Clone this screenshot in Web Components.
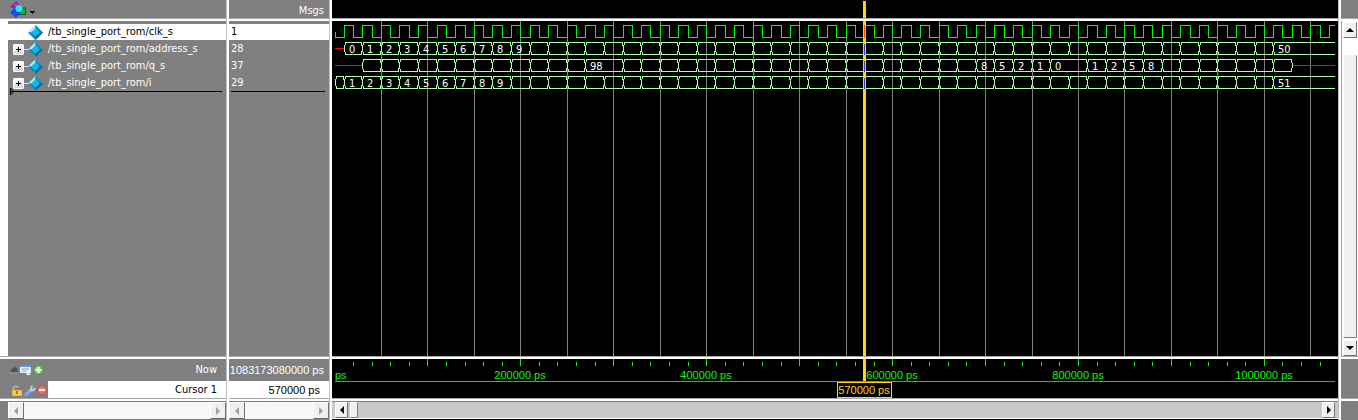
<!DOCTYPE html>
<html lang="en">
<head>
<meta charset="utf-8">
<title>Wave</title>
<style>
  html, body { margin: 0; height: 100%; background: #808080; }
  body { font: 11px/16px "DejaVu Sans Condensed", "DejaVu Sans", sans-serif; --num: "Liberation Sans", Arial, sans-serif; overflow: hidden; }
</style>
</head>
<body>
<wave-window>
  <wave-pane slot="names">
    <object-menu slot="head"></object-menu>
    <signal-names slot="body"></signal-names>
    <cursor-names slot="foot"></cursor-names>
    <scroll-bar slot="scroll" disabled></scroll-bar>
  </wave-pane>
  <wave-pane slot="values">
    <msgs-title slot="head">Msgs</msgs-title>
    <signal-values slot="body"></signal-values>
    <cursor-values slot="foot"></cursor-values>
    <scroll-bar slot="scroll" disabled></scroll-bar>
  </wave-pane>
  <wave-pane slot="waves">
    <wave-strip slot="head"></wave-strip>
    <wave-traces slot="body"></wave-traces>
    <time-ruler slot="foot"></time-ruler>
    <scroll-bar slot="scroll"></scroll-bar>
  </wave-pane>
  <wave-pane slot="side">
    <scroll-bar slot="body" vertical></scroll-bar>
  </wave-pane>
</wave-window>

<script>
const define = (name, html, ready) => {
  const t = document.createElement('template');
  t.innerHTML = html;
  customElements.define(name, class extends HTMLElement {
    constructor() {
      super();
      this.attachShadow({ mode: 'open' }).append(t.content.cloneNode(true));
    }
    connectedCallback() { if (ready) ready(this, this.shadowRoot); }
  });
};

const signals = [
  { name: '/tb_single_port_rom/clk_s', value: '1', bus: false },
  { name: '/tb_single_port_rom/address_s', value: '28', bus: true },
  { name: '/tb_single_port_rom/q_s', value: '37', bus: true },
  { name: '/tb_single_port_rom/i', value: '29', bus: true }
];

/* Time in ps to a pixel column of the wave area. */
const px = t => Math.floor(-0.1 + t * 0.0009295);
const CURSOR = 570000, END = 4000000, FAR = 4000;

define('wave-window', `
<style>
  :host { display: grid; height: 100vh; min-height: 200px;
    grid-template-columns: 226px 3px 100px 3px minmax(0, 1fr) 3px 17px; }
  i { background: linear-gradient(to right, #c0c0c0 1px, #fff 1px); }
</style>
<slot name="names"></slot><i></i><slot name="values"></slot><i></i><slot name="waves"></slot><i></i><slot name="side"></slot>`);

define('wave-pane', `
<style>
  :host { display: grid; min-width: 0; background: #808080;
    grid-template-columns: minmax(0, 1fr);
    grid-template-rows: 18px 3px minmax(0, 1fr) 3px 39px 4px 18px; }
  :host([slot="waves"]) { background: #000; }
  div { display: grid; grid-template-columns: minmax(0, 1fr); min-width: 0; min-height: 0; overflow: hidden; }
  i { background: linear-gradient(#a8a8a8 1px, #fff 1px); }
  i.low { background: linear-gradient(#a8a8a8 1px, #fff 1px, #fff 3px, #808080 3px); }
</style>
<div><slot name="head"></slot></div><i></i>
<div><slot name="body"></slot></div><i></i>
<div><slot name="foot"></slot></div><i class="low"></i>
<div><slot name="scroll"></slot></div>`);

define('object-menu', `
<style>
  :host { display: flex; padding-left: 9px; }
  button { display: flex; align-items: center; padding: 0; border: 0; background: none; height: 18px; }
</style>
<button aria-label="Object type"><svg width="28" height="18" viewBox="0 0 28 18">
  <path d="M2 7L7 2l5 5z" fill="#e020f0" stroke="#701080"/>
  <rect x="9.500" y="8" width="7" height="6.500" fill="#10b040" stroke="#086020"/>
  <path d="M1 12.500L6 7l6 6-5 5z" fill="#1050e8"/>
  <circle cx="10" cy="8.500" r="3.500" fill="#20e8f8"/>
  <path d="M21 11h5v1h-1v1h-1v1h-1v-1h-1v-1h-1z" fill="#000"/>
</svg></button>`);

define('msgs-title', `
<style>:host { display: block; text-align: right; padding: 3px 5px 0 0; line-height: 15px; color: #fff; }</style><slot></slot>`);

const gem = `<svg width="15" height="15" viewBox="0 0 15 15">
  <path d="M7.500 0L15 7.500 7.500 15 0 7.500z" fill="#18a8d8"/>
  <path d="M7.500 0L0 7.500h3.500l4-4z" fill="#a8ecfa"/>
  <path d="M7.500 0L15 7.500h-3.500l-4-4z" fill="#1890c0"/>
  <path d="M7.500 15L15 7.500h-3.500l-4 4z" fill="#056088"/>
  <path d="M7.500 15L0 7.500h3.500l4 4z" fill="#1c88b4"/>
  <path d="M7.500 3.500l4 4-4 4-4-4z" fill="#08bcec"/></svg>`;

define('signal-names', `
<style>
  :host { display: block; border-left: 8px solid #fff; padding-top: 3px; color: #fff; }
  ul { display: grid; gap: 1px; margin: 0; padding: 0; list-style: none; }
  li { display: grid; grid-template-columns: 20px 20px 1fr; height: 16px; align-items: center; line-height: 14px; white-space: nowrap; }
  li.on { background: #fff; color: #000; }
  li > svg { display: block; }
  button { position: relative; width: 11px; height: 11px; margin-left: 5px; padding: 0; border: 1px solid #fff; border-radius: 1px; background: linear-gradient(#fff, #d4d4dc); display: block; }
  button svg { position: absolute; left: 0; top: 0; overflow: visible; }
  .mark { display: block; overflow: visible; }
</style>
<ul></ul>
<svg class="mark" width="100%" height="1"><path d="M3 0H214V1H3z"/><path d="M2.500 -3V4L6 .500z" fill="none" stroke="#000"/></svg>`,
(el, root) => {
  root.querySelector('ul').innerHTML = signals.map((s, n) => `<li class="${n ? '' : 'on'}"><span>${s.bus
    ? `<button aria-label="Expand"><svg width="9" height="9"><path d="M2 4H7V5H2zM4 2H5V7H4z" fill="#000"/><path d="M10 4h5v1h-5z" fill="#e0e0e0"/></svg></button>` : ''}</span>${gem}<span>${s.name}</span></li>`).join('');
});

define('signal-values', `
<style>
  :host { display: block; padding-top: 3px; color: #fff; }
  ul { display: grid; gap: 1px; margin: 0; padding: 0; list-style: none; }
  li { height: 16px; padding-left: 2px; line-height: 16px; }
  li.on { background: #fff; color: #000; }
  hr { margin: 0 4px 0 2px; border: 0; height: 1px; background: #000; }
</style>
<ul></ul><hr>`,
(el, root) => {
  root.querySelector('ul').innerHTML = signals.map((s, n) => `<li class="${n ? '' : 'on'}">${s.value}</li>`).join('');
});

define('cursor-names', `
<style>
  :host { display: grid; grid-template-rows: 22px 17px; }
  div { display: grid; grid-template-columns: 48px 1fr; }
  span { text-align: right; padding-right: 9px; color: #fff; line-height: 22px; }
  .c span { background: #fff; color: #000; line-height: 18px; }
  nav { display: flex; align-items: center; padding-left: 9px; gap: 1px; }
  .c nav { padding-left: 11px; gap: 0; }
  button { display: block; padding: 0; border: 0; background: none; }
  svg { display: block; }
</style>
<div><nav>
  <button aria-label="Snap"><svg width="10" height="12"><path d="M1 8L3 4l1 1 1-3 2 2 1-1 1 6z" fill="#505050"/><path d="M0 9h10M2 8v2M7 8v2" stroke="#6a9cd8"/></svg></button>
  <button aria-label="Time display"><svg width="12" height="12"><rect x="0" y="1" width="11" height="8" fill="#e4eefa"/><rect x="0" y="1" width="11" height="2" fill="#5c98e0"/><path d="M2 5h7M2 7h4" stroke="#90a8c8"/><path d="M6 11l2-3 3 3z" fill="#e8f0f8"/></svg></button>
  <button aria-label="Add cursor"><svg width="12" height="12"><circle cx="5.500" cy="6" r="5" fill="#48a840"/><circle cx="5.500" cy="6" r="3.800" fill="#78c868"/><path d="M5.500 3v6M2.500 6h6" stroke="#fff" stroke-width="2"/></svg></button>
</nav><span>Now</span></div>
<div class="c"><nav>
  <button aria-label="Lock cursor"><svg width="13" height="13"><path d="M2.500 6V3.500a3 3 0 0 1 5 0" fill="none" stroke="#b8b8b0" stroke-width="1.500"/><rect x="1" y="6" width="10" height="6" fill="#f0b840"/><path d="M2 8h8M2 10h8" stroke="#f8d880"/><path d="M5 7h2v3H5z" fill="#b07818"/></svg></button>
  <button aria-label="Edit cursor"><svg width="13" height="13"><path d="M2 10.500L7 6" stroke="#78a8f0" stroke-width="3.500" stroke-linecap="round"/><path d="M6 7l2-2M8 1.500L7 5l2 1.500L11.500 4" stroke="#c0ccd8" stroke-width="2" fill="none"/></svg></button>
  <button aria-label="Remove cursor"><svg width="11" height="13"><circle cx="5" cy="6" r="5" fill="#d84840"/><circle cx="5" cy="6" r="4" fill="#ee706a"/><path d="M2 6h6" stroke="#fff" stroke-width="2"/></svg></button>
</nav><span>Cursor 1</span></div>`);

define('cursor-values', `
<style>
  :host { display: grid; grid-template-rows: 22px 17px; font-family: var(--num); white-space: nowrap; }
  div { text-align: right; padding-right: 5px; line-height: 22px; color: #fff; }
  .c { padding-right: 9px; background: #fff; color: #000; line-height: 18px; }
</style>
<div>1083173080000 ps</div><div class="c">570000 ps</div>`);

define('wave-strip', `
<style>:host { display: block; margin: 0 3px; } svg { display: block; width: 100%; height: 18px; }</style>
<svg><rect y="1" width="3" height="17" fill="#ffd700"/></svg>`,
(el, root) => root.querySelector('rect').setAttribute('x', px(CURSOR) - 1));

define('wave-traces', `
<style>
  :host { display: block; margin: 0 3px; min-height: 0; }
  svg { display: block; width: 100%; height: 100%; }
  path { fill: none; shape-rendering: crispEdges; }
  text { fill: #fff; }
</style><svg></svg>`,
(el, root) => {
  let grid = '', clk = 'M.5 11V16.500', out = '', over = '';
  for (let t = 50000; t < END; t += 50000) grid += `M${px(t) + .5} 0V3000`;
  for (let t = 10000; t < END; t += 20000)
    clk += `H${px(t) + .5}V4.500H${px(t + 10000) + .5}V16.500`;

  const bus = (top, edges, labels, red) => {
    const mid = top + 6, low = top + 12;
    let d = '';
    for (let n = 0; n < edges.length - 1; n++) {
      const a = edges[n] === null ? 0 : px(edges[n]), b = edges[n + 1] === null ? FAR : px(edges[n + 1]);
      d += `M${a + .5} ${mid}L${a + 1.5} ${top}H${b - .5}L${b + .5} ${mid}L${b - .5} ${low}H${a + 1.5}z`;
    }
    out += `<path d="${d}" stroke="#a8ffa8"/>`;
    for (const [a, b] of red) out += `<path d="M${a} ${mid}H${b}" stroke="#f00"/>`;
    for (const [t, s] of labels) out += `<text x="${px(t) + 5}" y="${top + 10.5}">${s}</text>`;
    over += `<path d="M${px(CURSOR) + .5} ${top + 1}V${low}" stroke="#5030a0"/>`;
  };
  const range = (from, to, skip = []) => {
    const r = [];
    for (let t = from; t <= to; t += 20000) if (!skip.includes(t)) r.push(t);
    return r;
  };
  bus(21.5, [...range(10000, 1010000), null],
    [...Array.from({ length: 10 }, (_, n) => [10000 + n * 20000, n]), [1010000, 50]], [[0, px(10000)]]);
  bus(38.5, range(30000, 1030000, [290000, 790000]),
    [[270000, 98], [690000, 8], [710000, 5], [730000, 2], [750000, 1], [770000, 0], [810000, 1], [830000, 2], [850000, 5], [870000, 8]],
    [[0, px(30000)], [px(1030000) + 1, FAR]]);
  bus(55.5, [null, ...range(10000, 1010000), null],
    [...Array.from({ length: 9 }, (_, n) => [10000 + n * 20000, n + 1]), [1010000, 51]], []);

  const c = px(CURSOR);
  root.querySelector('svg').innerHTML =
    `<path d="${grid}" stroke="#808080"/><path d="${clk}" stroke="#0f0"/>${out}
     <path d="M${c + .5} 0V3000" stroke="#ffd700" stroke-width="3"/>
     <path d="M${c + .5} 4V17" stroke="#ff4010"/>${over}`;
});

define('time-ruler', `
<style>
  :host { display: block; margin: 0 3px; font-family: var(--num); }
  svg { display: block; width: 100%; height: 39px; }
  path { fill: none; shape-rendering: crispEdges; }
  text { fill: #0f0; text-anchor: middle; }
  .zero { text-anchor: start; }
  .now { fill: #ffd700; }
</style><svg></svg>`,
(el, root) => {
  const svg = root.querySelector('svg');
  const draw = () => {
    const width = svg.clientWidth || el.getBoundingClientRect().width;
    let ticks = '', labels = '';
    for (let t = 20000; px(t) < width; t += 20000) ticks += `M${px(t) + .5} ${t % 100000 ? 3 : 0}V7`;
    for (let t = 200000; px(t) + 30 < width; t += 200000) labels += `<text x="${px(t)}" y="20">${t} ps</text>`;
    const c = px(CURSOR);
    svg.innerHTML =
      `<path d="${ticks}" stroke="#0f0"/><text class="zero" x="0" y="20">ps</text>${labels}
       <path d="M0 22.500H${FAR}" stroke="#808080"/>
       <path d="M${c + .5} 0V22" stroke="#ffd700" stroke-width="3"/>
       <rect x="${c - 26.5}" y="23.500" width="54" height="15" fill="#000" stroke="#ffd700"/>
       <text class="now" x="${c}" y="35">570000 ps</text>`;
  };
  draw();
  new ResizeObserver(draw).observe(el);
});

define('scroll-bar', `
<style>
  :host { display: flex; box-sizing: border-box; margin: 0 0 1px 8px; background: #f0f0f0; }
  :host([slot="scroll"]) { min-width: 0; }
  button { flex: none; display: grid; place-items: center; box-sizing: border-box; width: 16px; height: 100%; padding: 0;
    background: #f0f0f0; border: 1px solid; border-color: #fff #707070 #707070 #fff; }
  svg { display: block; fill: #000; }
  .track { flex: 1; display: flex; }
  .thumb { box-sizing: border-box; background: #f0f0f0; border: 1px solid; border-color: #fff #808080 #808080 #fff; }
  :host([disabled]) .track { background: repeating-conic-gradient(#fff 0 25%, #f0f0f0 0 50%) 0 0 / 2px 2px; }
  :host([disabled]) .thumb { display: none; }
  :host([disabled]) svg { fill: #a0a0a0; }
  :host(:not([disabled]):not([vertical])) { margin-left: 0; padding: 0 3px; background: #c8c8c8; border-bottom: 1px solid #fff; }
  :host(:not([vertical])) .thumb { width: 8px; margin-left: 2px; }
  :host(:not([disabled]):not([vertical])) button { width: 13px; }
  :host([vertical]) { flex-direction: column; margin: 0; padding: 1px 1px 0; background: #fff; border-left: 1px solid #a0a0a0; }
  :host([vertical]) button { width: 100%; height: 16px; }
  :host([vertical]) .track { padding: 17px 0 2px; }
  :host([vertical]) .thumb { flex: 1; border-top-color: #f0f0f0; }
</style>
<button class="back" tabindex="-1" aria-label="Scroll back"></button>
<div class="track"><div class="thumb"></div></div>
<button class="on" tabindex="-1" aria-label="Scroll forward"></button>`,
(el, root) => {
  const v = el.hasAttribute('vertical');
  const draw = (sel, d) => { root.querySelector(sel).innerHTML = `<svg width="8" height="8"><path d="${d}"/></svg>`; };
  draw('.back', v ? 'M0 6L4 2l4 4z' : 'M6 0L2 4l4 4z');
  draw('.on', v ? 'M0 2l4 4 4-4z' : 'M2 0l4 4-4 4z');
  if (el.hasAttribute('disabled')) root.querySelectorAll('button').forEach(b => { b.disabled = true; });
});

/* The values pane has no gutter on its left. */
document.querySelector('wave-pane[slot="values"] scroll-bar').style.marginLeft = '0';
</script>
</body>
</html>
